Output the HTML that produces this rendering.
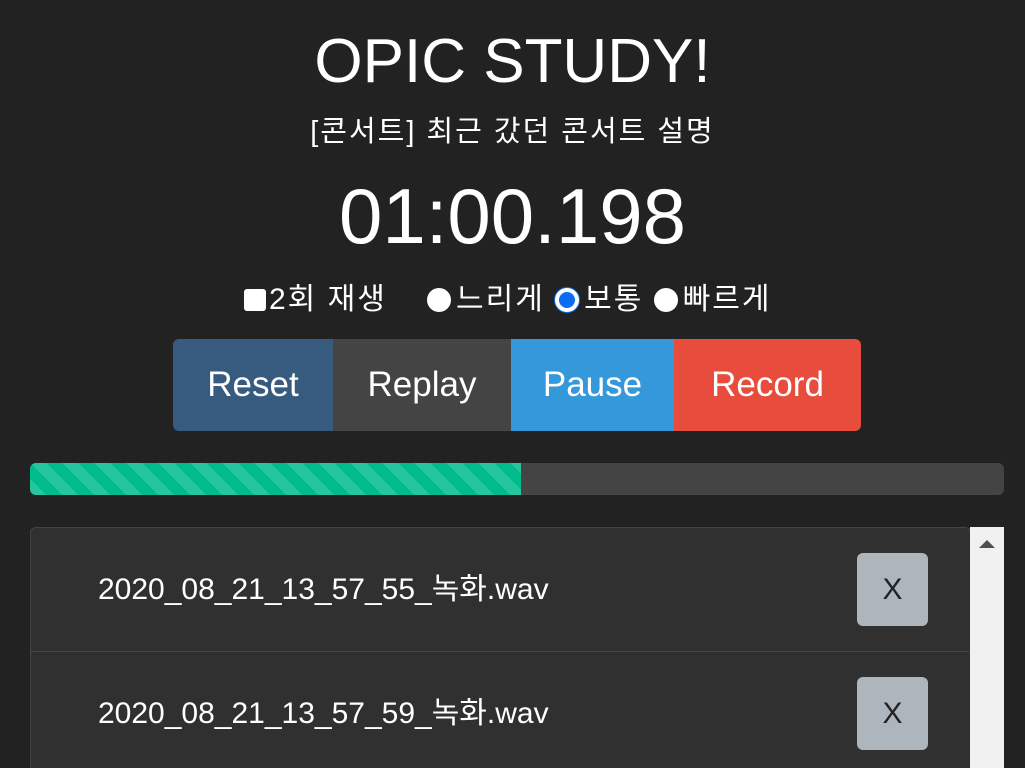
<!DOCTYPE html>
<html><head><meta charset="utf-8"><style>
html,body{margin:0;background:#222;width:1025px;height:768px;overflow:hidden}
body{font-family:"Liberation Sans","Noto Sans CJK KR",sans-serif;color:#fff;position:relative}
.a{position:absolute;white-space:nowrap}
.c{left:0;width:1025px;text-align:center}
.btn{position:absolute;top:339px;height:92px;line-height:92px;text-align:center;font-size:35px}
.row{position:absolute;left:31px;width:938px;height:123px;border-bottom:1px solid #444;background:#303030}
.row span{position:absolute;left:67px;top:0;line-height:124px;font-size:30px}
.x{position:absolute;left:826px;top:25px;width:71px;height:73px;background:#adb5bd;border-radius:6px;color:#222;font-size:30px;text-align:center;line-height:73px}
.k{font-size:30px;letter-spacing:2px}
</style></head><body>
<div class="a c" style="top:26px;font-size:62px;line-height:72px">OPIC STUDY!</div>
<div class="a c" style="top:112px;line-height:40px;font-size:29px;letter-spacing:2px">[콘서트] 최근 갔던 콘서트 설명</div>
<div class="a c" style="top:170px;font-size:78px;line-height:92px">01:00.198</div>
<div class="a k" style="top:280px;left:244px;line-height:40px">
<span style="display:inline-block;width:22px;height:22px;background:#fff;border-radius:3px;vertical-align:-2px;margin-right:3px"></span>2회 재생</div>
<div class="a k" style="top:280px;left:427px;line-height:40px">
<span style="display:inline-block;width:24px;height:24px;background:#fff;border-radius:50%;vertical-align:-3px;margin-right:5px"></span>느리게
<span style="display:inline-block;width:16px;height:16px;background:#0a6cf0;border:4px solid #fff;box-shadow:0 0 0 1px #0a6cf0;border-radius:50%;vertical-align:-3px;margin-right:5px"></span>보통
<span style="display:inline-block;width:24px;height:24px;background:#fff;border-radius:50%;vertical-align:-3px;margin-right:5px"></span>빠르게</div>
<div class="btn" style="left:173px;width:160px;background:#375a7f;border-radius:6px 0 0 6px">Reset</div>
<div class="btn" style="left:333px;width:178px;background:#444">Replay</div>
<div class="btn" style="left:511px;width:163px;background:#3498db">Pause</div>
<div class="btn" style="left:674px;width:187px;background:#e74c3c;border-radius:0 6px 6px 0">Record</div>
<div class="a" style="top:463px;left:30px;width:974px;height:32px;background:#444;border-radius:6px;overflow:hidden">
<div style="width:491px;height:32px;background-color:#00bc8c;background-image:linear-gradient(45deg,rgba(255,255,255,.15) 25%,transparent 25%,transparent 50%,rgba(255,255,255,.15) 50%,rgba(255,255,255,.15) 75%,transparent 75%,transparent);background-size:32px 32px"></div></div>
<div class="a" style="top:527px;left:30px;width:939px;height:240px;border:1px solid #444;border-bottom:none;border-radius:6px 6px 0 0;background:#303030;overflow:hidden">
<div class="row" style="left:0;top:0"><span>2020_08_21_13_57_55_녹화.wav</span><div class="x">X</div></div>
<div class="row" style="left:0;top:124px"><span>2020_08_21_13_57_59_녹화.wav</span><div class="x">X</div></div>
</div>
<div class="a" style="top:527px;left:970px;width:34px;height:241px;background:#f1f1f1">
<div style="margin:13px auto 0;width:0;height:0;border-left:8px solid transparent;border-right:8px solid transparent;border-bottom:8px solid #505050"></div></div>
</body></html>
